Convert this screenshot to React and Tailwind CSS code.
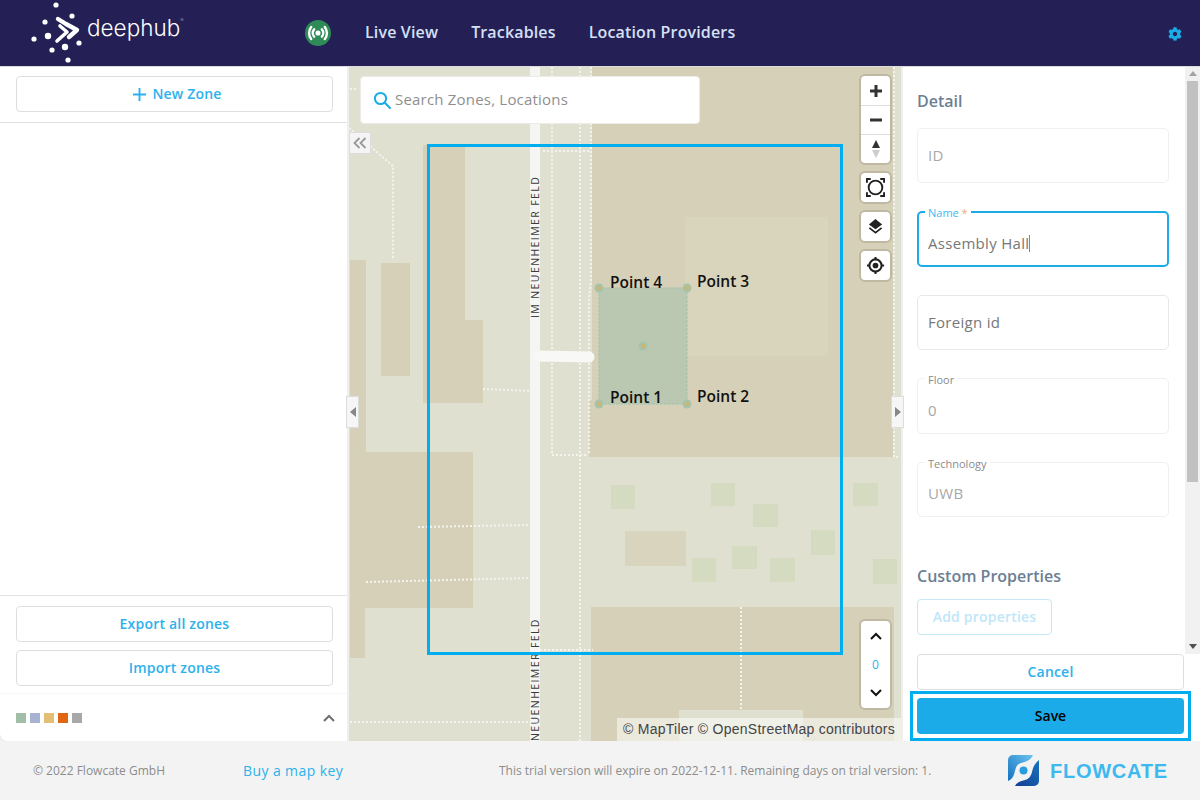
import { FaCog } from 'react-icons/fa'

const BLUE = '#1aabe8'

const BUILDINGS = [
  [592, 67, 301, 390],
  [589, 400, 40, 57],
  [423, 145, 42, 176],
  [423, 320, 60, 83],
  [350, 260, 16, 192],
  [381, 263, 29, 113],
  [350, 452, 123, 156],
  [350, 608, 15, 50],
  [591, 607, 303, 134],
]

const GREENS = [
  [611, 485, 24, 24],
  [711, 483, 24, 23],
  [753, 504, 25, 23],
  [811, 530, 24, 25],
  [853, 483, 25, 23],
  [732, 546, 25, 23],
  [770, 558, 25, 24],
  [692, 558, 24, 24],
  [873, 559, 24, 25],
]

const PATHS = [
  'M552 67V455H588',
  'M580 67V741',
  'M591 67V280L589 300V455',
  'M543 151H591',
  'M349 128L393 166V260',
  'M350 89H358',
  'M483 389L530 391',
  'M418 527L530 525',
  'M366 582L530 578',
  'M350 722H530',
  'M540 650H593',
  'M741 607V710',
  'M894 67V457H899',
]

const HANDLES = [
  [599, 288],
  [687, 288],
  [687, 404],
  [599, 404],
  [643, 346],
]

const POINT_LABELS = [
  ['Point 4', 610, 288],
  ['Point 3', 697, 287],
  ['Point 1', 610, 403],
  ['Point 2', 697, 402],
]

function MapDrawing() {
  return (
    <svg viewBox="349 67 552 674" className="absolute inset-0 w-full h-full">
      <rect x="349" y="67" width="552" height="674" fill="#dfe0d0" />
      {BUILDINGS.map(([x, y, w, h]) => (
        <rect key={`${x}-${y}`} x={x} y={y} width={w} height={h} fill="#d7d0b8" />
      ))}
      <rect x="685" y="217" width="143" height="139" fill="#d9d4bc" />
      <rect x="625" y="531" width="61" height="35" fill="#d9d4be" />
      <rect x="679" y="710" width="124" height="31" fill="#dfe0d0" />
      {GREENS.map(([x, y, w, h]) => (
        <rect key={`${x}-${y}`} x={x} y={y} width={w} height={h} fill="#d5dbc0" />
      ))}
      {PATHS.map((d) => (
        <path key={d} d={d} fill="none" stroke="#f4f4ee" strokeWidth="2" strokeDasharray="2 2" />
      ))}
      <rect x="530" y="67" width="10" height="674" fill="#f5f5f3" />
      <path d="M540 356L589 357" stroke="#f8f8f6" strokeWidth="11" strokeLinecap="round" />

      <text
        transform="translate(539 318) rotate(-90)"
        fontFamily="'Open Sans', sans-serif"
        fontSize="10.5"
        fontWeight="500"
        letterSpacing="1.4"
        fill="#3a3a38"
      >
        IM NEUENHEIMER FELD
      </text>
      <text
        transform="translate(539 741) rotate(-90)"
        fontFamily="'Open Sans', sans-serif"
        fontSize="10.5"
        fontWeight="500"
        letterSpacing="1.4"
        fill="#3a3a38"
      >
        NEUENHEIMER FELD
      </text>

      <rect x="599" y="288" width="88" height="116" fill="#bac8b1" stroke="#a3c4ae" strokeWidth="1" strokeDasharray="3 1" />
      {HANDLES.map(([x, y]) => (
        <g key={`${x}-${y}`}>
          <circle cx={x} cy={y} r="4.5" fill="#a3c4ae" />
          <circle cx={x} cy={y} r="2.5" fill="#c8b878" />
        </g>
      ))}
      {POINT_LABELS.map(([label, x, y]) => (
        <text key={label} x={x} y={y} fontFamily="'Open Sans', sans-serif" fontSize="15.5" fontWeight="550" fill="#111">
          {label}
        </text>
      ))}
    </svg>
  )
}

function DeephubMark() {
  const dots = [
    [56, 5, 2.6], [72, 16, 2.6], [45, 22, 2.6], [34, 39, 2.6], [48, 36, 3.2],
    [79, 43, 2.6], [52, 50, 2.6], [65, 47, 3.2], [68, 60, 2.6],
  ]
  return (
    <svg viewBox="28 0 56 66" className="w-[56px] h-[66px] shrink-0">
      {dots.map(([cx, cy, r]) => (
        <circle key={`${cx}-${cy}`} cx={cx} cy={cy} r={r} fill="#fff" />
      ))}
      <path d="M58 19L66 24L77 30L69 37" fill="none" stroke="#fff" strokeWidth="4.4" strokeLinecap="round" strokeLinejoin="round" />
      <path d="M60 26L67 32L57 41" fill="none" stroke="#fff" strokeWidth="3.6" strokeLinecap="round" strokeLinejoin="round" />
    </svg>
  )
}

function Header() {
  return (
    <header className="h-[67px] shrink-0 bg-[#241f55] border-b border-[#dcdcdc] flex items-center pl-[28px] pr-[18px]">
      <DeephubMark />
      <div className="w-[101px] shrink-0 pl-[3px] flex items-start text-white font-['Inter',sans-serif] font-light text-[22.5px] leading-none -mt-[9px]">
        <span>deephub</span>
        <span className="text-[5px] leading-[6px] text-[#aaa]">®</span>
      </div>
      <div className="ml-[120px] w-[26px] h-[26px] rounded-full bg-[#2e8b57] flex items-center justify-center shrink-0">
        <svg viewBox="0 0 24 24" className="w-[22px] h-[22px]" fill="none" stroke="#fff" strokeWidth="2.6" strokeLinecap="round">
          <circle cx="12" cy="12" r="2.8" fill="#fff" stroke="none" />
          <path d="M7.8 8a6 6 0 0 0 0 8" />
          <path d="M16.2 8a6 6 0 0 1 0 8" />
          <path d="M4.6 5.4a10.4 10.4 0 0 0 0 13.2" />
          <path d="M19.4 5.4a10.4 10.4 0 0 1 0 13.2" />
        </svg>
      </div>
      <nav className="ml-[34px] flex gap-[33px] text-[16px] font-semibold tracking-[0.15px] text-[#d5e0f5] pb-[2px]">
        <span>Live View</span>
        <span>Trackables</span>
        <span>Location Providers</span>
      </nav>
      <FaCog className="ml-auto text-[#1aabe8] w-[14px] h-[14px] mt-[2px]" />
    </header>
  )
}

function OutlineButton({ children, className = '' }) {
  return (
    <button className={`h-[36px] pb-[2px] rounded border border-[#dedede] bg-white text-[14px] font-semibold tracking-[0.2px] text-[#2cb1ec] flex items-center justify-center ${className}`}>
      {children}
    </button>
  )
}

function LeftPanel() {
  const swatches = ['#a0bea8', '#a6b4d2', '#e3be75', '#e06611', '#a8a8a8']
  return (
    <aside className="w-[347px] shrink-0 bg-white flex flex-col rounded-bl-lg">
      <div className="h-[56px] border-b border-[#e2e2e2] pl-[16px] pr-[14px] pt-[9px] shrink-0">
        <OutlineButton className="w-full gap-[5px] pl-[5px]">
          <svg viewBox="0 0 16 16" className="w-[15px] h-[15px] mt-[2px]" stroke="#2cb1ec" strokeWidth="2">
            <path d="M8 1V15M1 8H15" />
          </svg>
          New Zone
        </OutlineButton>
      </div>
      <div className="flex-1" />
      <div className="border-t border-[#e2e2e2] pl-[16px] pr-[14px] pt-[10px] pb-[7px] flex flex-col gap-[8px] shrink-0">
        <OutlineButton>Export all zones</OutlineButton>
        <OutlineButton>Import zones</OutlineButton>
      </div>
      <div className="h-[48px] shrink-0 rounded-bl-lg border-t border-[#f3f8fb] pl-[16px] pr-[12px] flex items-center justify-between">
        <div className="flex gap-[4px]">
          {swatches.map((c) => (
            <span key={c} className="w-[10px] h-[10px]" style={{ backgroundColor: c }} />
          ))}
        </div>
        <svg viewBox="0 0 12 8" className="w-[12px] h-[8px]" fill="none" stroke="#6f6f6f" strokeWidth="2">
          <path d="M1 7L6 2L11 7" />
        </svg>
      </div>
    </aside>
  )
}

function MapControlBox({ children, className = '' }) {
  return (
    <div className={`w-[33px] rounded-[6px] bg-white border-2 border-[#bfb9a3] flex flex-col items-center ${className}`}>
      {children}
    </div>
  )
}

function MapArea() {
  return (
    <main className="relative flex-1 overflow-hidden mx-[2px]">
      <MapDrawing />

      <div className="absolute left-[11px] top-[9px] w-[340px] h-[48px] bg-white rounded border border-[#ecece6] flex items-center pl-[12px]">
        <svg viewBox="0 0 18 18" className="w-[18px] h-[18px]" fill="none" stroke={BLUE} strokeWidth="2" strokeLinecap="round">
          <circle cx="7.5" cy="7.5" r="5.6" />
          <path d="M11.8 11.8L17 17" />
        </svg>
        <span className="ml-[4px] pb-px text-[15px] tracking-[0.2px] text-[#8f8f8f]">Search Zones, Locations</span>
      </div>

      <div className="absolute left-0 top-[65px] w-[22px] h-[22px] bg-[#f4f4f4] border border-[#dcdcdc] flex items-center justify-center">
        <svg viewBox="0 0 14 12" className="w-[14px] h-[12px]" fill="none" stroke="#999" strokeWidth="1.8">
          <path d="M6.5 1L1.5 6L6.5 11M12.5 1L7.5 6L12.5 11" />
        </svg>
      </div>

      <div className="absolute left-[78px] top-[77px] w-[416px] h-[511px] border-[3px] border-[#00aeef]" />

      <div className="absolute left-[510px] top-[7px] flex flex-col gap-[6px]">
        <MapControlBox className="h-[91px]">
          <div className="h-[30px] w-full flex items-center justify-center border-b border-[#ddd]">
            <svg viewBox="0 0 12 12" className="w-[12px] h-[12px]" stroke="#333" strokeWidth="3">
              <path d="M6 0V12M0 6H12" />
            </svg>
          </div>
          <div className="h-[29px] w-full flex items-center justify-center border-b border-[#ddd]">
            <svg viewBox="0 0 12 4" className="w-[12px] h-[4px]" stroke="#333" strokeWidth="3">
              <path d="M0 2H12" />
            </svg>
          </div>
          <div className="flex-1 w-full flex items-center justify-center">
            <svg viewBox="0 0 10 18" className="w-[10px] h-[18px]">
              <path d="M5 0L9 8H1Z" fill="#333" />
              <path d="M5 18L9 10H1Z" fill="#ccc" />
            </svg>
          </div>
        </MapControlBox>
        <MapControlBox className="h-[33px] justify-center">
          <svg viewBox="0 0 20 20" className="w-[19px] h-[19px]" fill="none" stroke="#222">
            <circle cx="10" cy="10" r="7.2" strokeWidth="2" />
            <path d="M1 5V1H5M15 1H19V5M19 15V19H15M5 19H1V15" strokeWidth="2" />
          </svg>
        </MapControlBox>
        <MapControlBox className="h-[33px] justify-center">
          <svg viewBox="0 0 18 18" className="w-[17px] h-[17px]">
            <path d="M9 1L16 7L9 12L2 7Z" fill="#222" />
            <path d="M2.5 10.5L9 15.5L15.5 10.5" fill="none" stroke="#222" strokeWidth="1.8" />
          </svg>
        </MapControlBox>
        <MapControlBox className="h-[33px] justify-center">
          <svg viewBox="0 0 20 20" className="w-[19px] h-[19px]" fill="none" stroke="#222" strokeWidth="2.2">
            <circle cx="10" cy="10" r="6.4" />
            <circle cx="10" cy="10" r="3" fill="#222" stroke="none" />
            <path d="M10 1V4M10 16V19M1 10H4M16 10H19" />
          </svg>
        </MapControlBox>
      </div>

      <MapControlBox className="absolute left-[510px] top-[552px] h-[91px] justify-between py-[11px]">
        <svg viewBox="0 0 12 8" className="w-[12px] h-[8px]" fill="none" stroke="#111" strokeWidth="2">
          <path d="M1 7L6 2L11 7" />
        </svg>
        <span className="text-[12px] leading-none text-[#2cb1ec]">0</span>
        <svg viewBox="0 0 12 8" className="w-[12px] h-[8px]" fill="none" stroke="#111" strokeWidth="2">
          <path d="M1 1L6 6L11 1" />
        </svg>
      </MapControlBox>

      <div className="absolute right-0 bottom-0 h-[23px] w-[284px] bg-white/50 flex items-center justify-center font-['Liberation_Sans',sans-serif] text-[14px] tracking-[0.25px] text-[#444]">
        © MapTiler © OpenStreetMap contributors
      </div>
    </main>
  )
}

function Field({ label, value, tone = 'normal' }) {
  const active = tone === 'active'
  const border = active ? 'border-2 border-[#1aabe8] pl-[9px]' : tone === 'faint' ? 'border border-[#f0f0f0] pl-[10px]' : 'border border-[#e8e8e8] pl-[10px]'
  const text = tone === 'faint' ? 'text-[#a8a8a8]' : 'text-[#777]'
  return (
    <div className={`relative w-[252px] h-[55.5px] mt-[28px] rounded-[5px] flex items-center ${label ? 'pt-[8px]' : ''} ${border}`}>
      {label && (
        <span className={`absolute bg-white px-[3px] text-[11px] leading-[13px] ${active ? 'left-[6px] -top-[7px] text-[#3ebcf0]' : 'left-[7px] -top-[6px] text-[#8a8a8a]'}`}>
          {label}
          {active && <span className="text-[#f0a878]"> *</span>}
        </span>
      )}
      <span className={`text-[15px] tracking-[0.3px] ${text}`}>{value}</span>
      {active && <span className="w-px h-[17px] bg-[#1aabe8]" />}
    </div>
  )
}

function RightPanel() {
  return (
    <aside className="w-[297px] shrink-0 bg-white flex flex-col">
      <div className="h-[587px] shrink-0 flex">
        <div className="flex-1 overflow-hidden pl-[14px] pt-[24px]">
          <h2 className="text-[16px] leading-[20px] font-semibold text-[#6c7f93] mb-[-11.25px]">Detail</h2>
          <Field value="ID" tone="faint" />
          <Field label="Name" value="Assembly Hall" tone="active" />
          <Field value="Foreign id" />
          <Field label="Floor" value="0" tone="faint" />
          <Field label="Technology" value="UWB" tone="faint" />
          <h2 className="mt-[48.75px] text-[16px] leading-[20px] font-semibold text-[#6c7f93]">Custom Properties</h2>
          <button className="mt-[13px] w-[135px] h-[36px] pb-[2px] rounded border border-[#c6e9f9] text-[14px] font-semibold tracking-[0.2px] text-[#bfe6f9]">
            Add properties
          </button>
        </div>
        <div className="w-[15px] bg-[#f1f1f1] flex flex-col items-center">
          <svg viewBox="0 0 8 5" className="w-[8px] h-[5px] mt-[4px] shrink-0">
            <path d="M4 0L8 5H0Z" fill="#a3a3a3" />
          </svg>
          <div className="w-full flex-1 mt-[5px] mb-[2px]">
            <div className="h-[401px] ml-[2px] w-[11px] bg-[#c1c1c1]" />
          </div>
          <svg viewBox="0 0 8 5" className="w-[8px] h-[5px] mb-[5px] shrink-0">
            <path d="M4 5L8 0H0Z" fill="#505050" />
          </svg>
        </div>
      </div>
      <OutlineButton className="ml-[14px] w-[267px] shrink-0">Cancel</OutlineButton>
      <div className="ml-[7px] mt-px w-[281px] h-[50px] border-[3px] border-[#00aeef] p-[4px] shrink-0">
        <button className="w-full h-full pb-[2px] rounded bg-[#1aabe8] text-[14px] font-semibold text-black">Save</button>
      </div>
    </aside>
  )
}

function FlowcateMark() {
  return (
    <svg viewBox="0 0 32 32" className="w-[32px] h-[32px] shrink-0">
      <defs>
        <linearGradient id="flowTop" x1="0" y1="1" x2="1" y2="0">
          <stop offset="0" stopColor="#1273c0" />
          <stop offset="1" stopColor="#6cc3ee" />
        </linearGradient>
        <linearGradient id="flowBottom" x1="0" y1="1" x2="1" y2="0">
          <stop offset="0" stopColor="#123f93" />
          <stop offset="1" stopColor="#1a73bd" />
        </linearGradient>
      </defs>
      <path d="M5 0H25C23 5 18 7 13 8C9 9 8 12 7 16C6 20 5 23 2 25L0 26V5A5 5 0 0 1 5 0Z" fill="url(#flowTop)" />
      <path d="M31 5V26A5 5 0 0 1 26 31H7C9 27 13 26 17 25C21 24 23 21 24 17C25 12 27 8 31 5Z" fill="url(#flowBottom)" />
      <circle cx="15.5" cy="15.5" r="4" fill="#2a9de0" />
    </svg>
  )
}

function Footer() {
  return (
    <footer className="h-[59px] shrink-0 bg-[#f3f3f3] flex items-center pl-[33px]">
      <span className="w-[210px] text-[12px] text-[#8c8c8c]">© 2022 Flowcate GmbH</span>
      <span className="w-[256px] text-[14px] tracking-[0.4px] text-[#2cb1ec]">Buy a map key</span>
      <span className="w-[509px] text-[12px] text-[#8c8c8c]">
        This trial version will expire on 2022-12-11. Remaining days on trial version: 1.
      </span>
      <FlowcateMark />
      <span className="ml-[10px] font-['Liberation_Sans',sans-serif] font-bold text-[20px] tracking-[0.75px] text-[#3db9ef]">FLOWCATE</span>
    </footer>
  )
}

export default function App() {
  return (
    <div className="w-[1200px] h-[800px] flex flex-col overflow-hidden bg-[#efefef] font-['Open_Sans',sans-serif]">
      <Header />
      <div className="flex-1 min-h-0 flex relative">
        <LeftPanel />
        <MapArea />
        <RightPanel />
        <div className="absolute left-[346px] top-[329px] w-[13px] h-[32px] bg-[#f6f6f6] border border-[#dcdcdc] flex items-center justify-center">
          <svg viewBox="0 0 6 10" className="w-[6px] h-[10px]"><path d="M6 0V10L0 5Z" fill="#888" /></svg>
        </div>
        <div className="absolute left-[891px] top-[329px] w-[13px] h-[32px] bg-[#f6f6f6] border border-[#dcdcdc] flex items-center justify-center">
          <svg viewBox="0 0 6 10" className="w-[6px] h-[10px]"><path d="M0 0V10L6 5Z" fill="#888" /></svg>
        </div>
      </div>
      <Footer />
    </div>
  )
}
